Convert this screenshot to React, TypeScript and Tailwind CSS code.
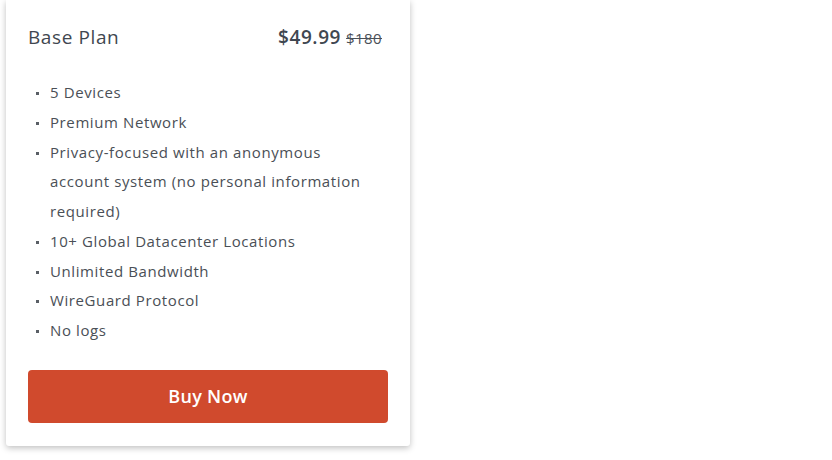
import React from "react";

const items = [
  "5 Devices",
  "Premium Network",
  "Privacy-focused with an anonymous account system (no personal information required)",
  "10+ Global Datacenter Locations",
  "Unlimited Bandwidth",
  "WireGuard Protocol",
  "No logs",
];

export default function App() {
  return (
    <div className="w-[832px] h-[460px] bg-white" style={{ fontFamily: '"Open Sans", sans-serif' }}>
      <div className="ml-[6px] w-[404px] bg-white px-[22px] pt-[23px] pb-[23px] shadow-[0_2px_6px_rgba(0,0,0,0.25)] rounded-b-[3px]">
        <div className="flex items-center justify-between h-[28px] pr-[6px]">
          <span className="text-[19px] tracking-[0.6px] text-[#3f4750]">Base Plan</span>
          <span className="flex items-baseline gap-[5px]">
            <span className="text-[19px] font-semibold tracking-[0.6px] text-[#3f4750]">$49.99</span>
            <span className="text-[15px] tracking-[0.4px] text-[#4a5058] line-through">$180</span>
          </span>
        </div>
        <ul className="mt-[27px] text-[15px] leading-[29.75px] tracking-[0.6px] text-[#4a4f56]">
          {items.map((t) => (
            <li key={t} className="flex">
              <span className="w-[22px] shrink-0 flex items-start pt-[14px] pl-[8px]">
                <span className="block w-[3px] h-[3px] bg-[#5a5f66]" />
              </span>
              <span className="w-[322px]">{t}</span>
            </li>
          ))}
        </ul>
        <button className="mt-[24px] w-full h-[53px] rounded-[4px] bg-[#d04a2d] text-white text-[18px] font-semibold tracking-[0.3px]">
          Buy Now
        </button>
      </div>
    </div>
  );
}
